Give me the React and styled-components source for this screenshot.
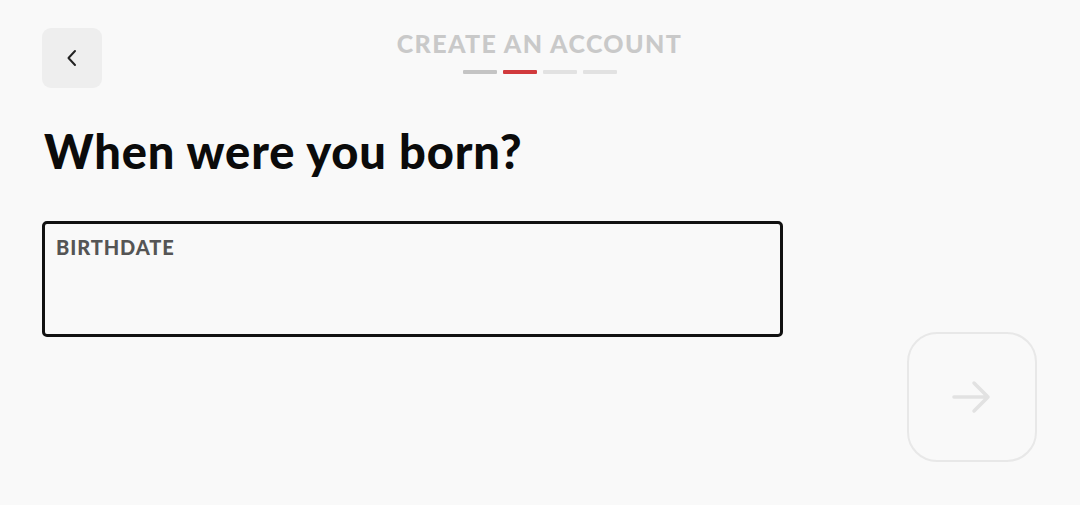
import React from 'react';
import styled, { createGlobalStyle } from 'styled-components';

const GlobalStyle = createGlobalStyle`
  html, body {
    margin: 0;
    padding: 0;
    background: #f9f9f9;
    font-family: 'Lato', 'Noto Sans', sans-serif;
  }
`;

const Page = styled.div`
  width: 1080px;
  height: 505px;
  box-sizing: border-box;
  padding: 28px 43px 0 42px;
  display: flex;
  flex-direction: column;
`;

const Header = styled.div`
  display: grid;
  grid-template-columns: 60px 1fr 60px;
  align-items: start;
`;

const BackButton = styled.button`
  width: 60px;
  height: 60px;
  border: none;
  border-radius: 9px;
  background: #eeeeee;
  display: flex;
  align-items: center;
  justify-content: center;
  padding: 0;
  color: #222;
`;

const Steps = styled.div`
  display: flex;
  flex-direction: column;
  align-items: center;
  padding-top: 1px;
`;

const StepTitle = styled.div`
  font-size: 25px;
  font-weight: 900;
  letter-spacing: 1.4px;
  color: #c9c9c9;
  line-height: 28px;
`;

const Bars = styled.div`
  display: flex;
  gap: 6px;
  margin-top: 13px;
`;

const Bar = styled.div`
  width: 34px;
  height: 4px;
  border-radius: 1px;
  background: ${(p) => p.$color};
`;

const Heading = styled.h1`
  margin: 35px 0 0 2px;
  font-size: 47px;
  font-weight: 900;
  letter-spacing: 0.9px;
  color: #0b0b0b;
  line-height: 56px;
`;

const Field = styled.div`
  margin-top: 42px;
  width: 741px;
  height: 116px;
  box-sizing: border-box;
  border: 3px solid #111;
  border-radius: 5px;
  padding: 12px 11px;
`;

const FieldLabel = styled.div`
  font-size: 20px;
  font-weight: 900;
  letter-spacing: 0.9px;
  color: #555555;
  line-height: 22px;
`;

const Footer = styled.div`
  display: flex;
  justify-content: flex-end;
  margin-top: -5px;
`;

const NextButton = styled.button`
  width: 130px;
  height: 130px;
  box-sizing: border-box;
  border: 2px solid #e8e8e8;
  border-radius: 30px;
  background: transparent;
  display: flex;
  align-items: center;
  justify-content: center;
  padding: 0;
`;

export default function App() {
  return (
    <>
      <GlobalStyle />
      <Page>
        <Header>
          <BackButton>
            <svg width="14" height="20" viewBox="0 0 14 20" fill="none">
              <path d="M10 3 L3.5 10 L10 17" stroke="#222" strokeWidth="2" strokeLinecap="round" strokeLinejoin="round" />
            </svg>
          </BackButton>
          <Steps>
            <StepTitle>CREATE AN ACCOUNT</StepTitle>
            <Bars>
              <Bar $color="#c4c4c4" />
              <Bar $color="#d13a3d" />
              <Bar $color="#e2e2e2" />
              <Bar $color="#e2e2e2" />
            </Bars>
          </Steps>
          <div />
        </Header>
        <Heading>When were you born?</Heading>
        <Field>
          <FieldLabel>BIRTHDATE</FieldLabel>
        </Field>
        <Footer>
          <NextButton>
            <svg width="40" height="36" viewBox="0 0 40 36" fill="none">
              <path d="M2 18 H36 M22 4 L36 18 L22 32" stroke="#e2e2e2" strokeWidth="3.5" strokeLinecap="round" strokeLinejoin="round" />
            </svg>
          </NextButton>
        </Footer>
      </Page>
    </>
  );
}
